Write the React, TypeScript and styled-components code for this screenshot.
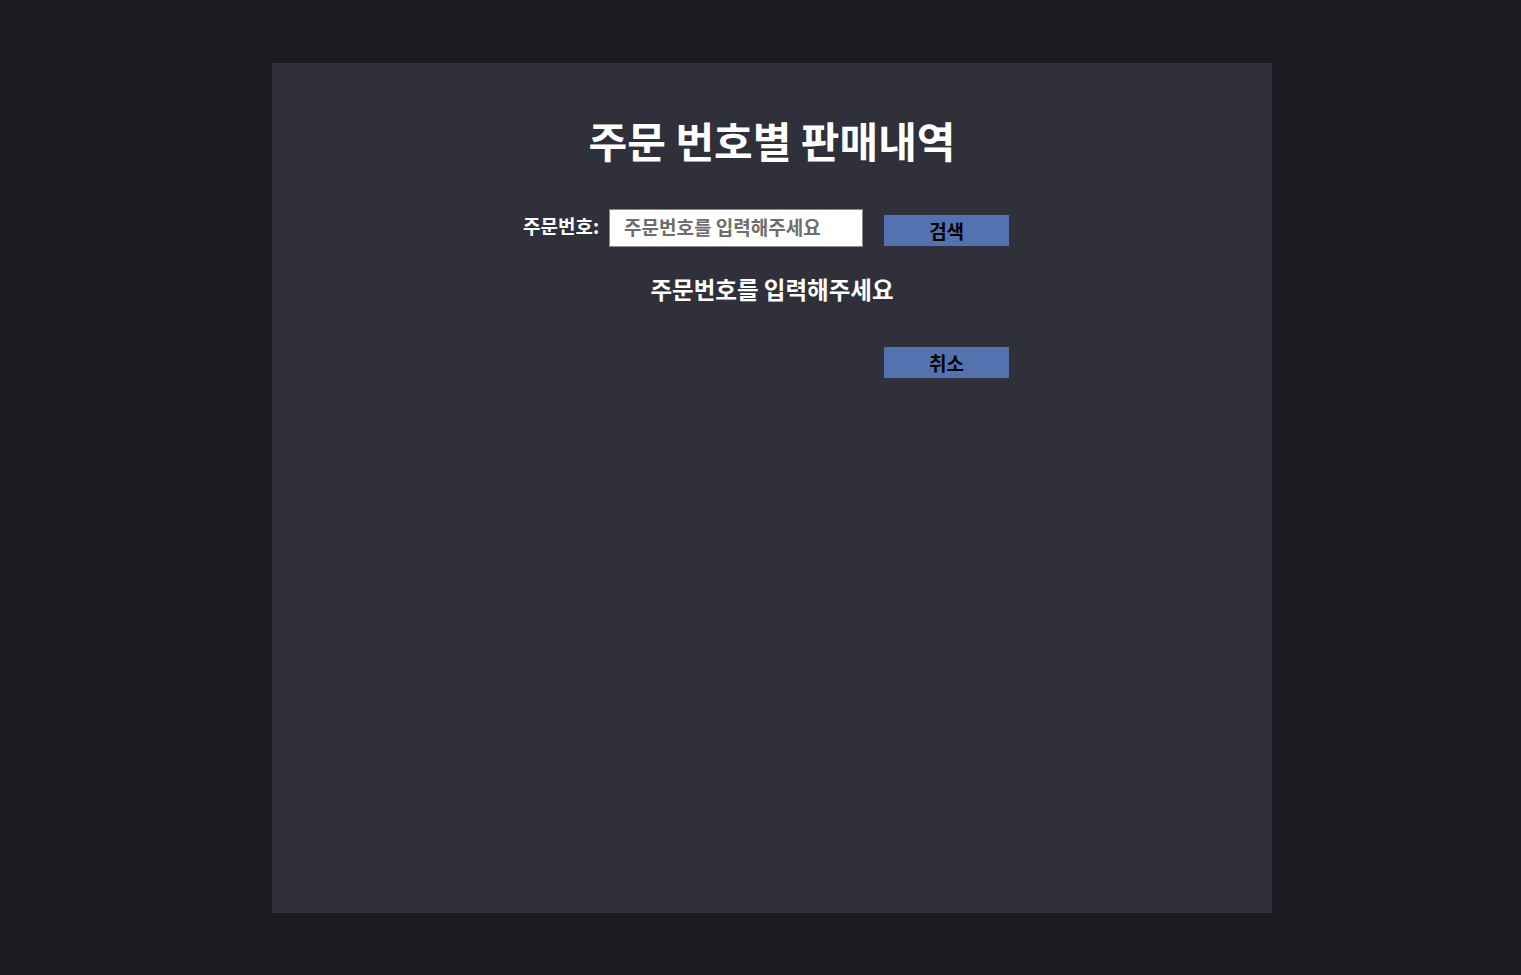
import React from "react";
import styled, { createGlobalStyle } from "styled-components";

const Global = createGlobalStyle`
  html, body { margin: 0; padding: 0; background: #1b1c20; }
  body { font-family: "Noto Sans CJK KR", "Noto Sans", sans-serif; }
  * { box-sizing: border-box; }
`;

const Page = styled.div`
  min-height: 975px;
  padding: 63px 0 0 23px;
  display: flex;
  justify-content: center;
`;

const Panel = styled.main`
  width: 1000px;
  height: 850px;
  background: #30303a;
  display: flex;
  flex-direction: column;
  align-items: center;
  padding-top: 56px;
`;

const Title = styled.h1`
  margin: 0;
  color: #fff;
  font-size: 42px;
  font-weight: 700;
  line-height: 1;
`;

const Block = styled.div`
  width: 498px;
  margin-top: 48px;
  display: flex;
  flex-direction: column;
`;

const Row = styled.div`
  display: flex;
  align-items: flex-start;
`;

const Label = styled.label`
  color: #fff;
  font-size: 19px;
  font-weight: 700;
  line-height: 1;
  margin-top: 7px;
  margin-right: 10px;
  white-space: nowrap;
`;

const Input = styled.input`
  width: 254px;
  height: 38px;
  flex: none;
  border: 1px solid #8a8a8a;
  background: #fff;
  padding: 0 0 4px 14px;
  font-family: inherit;
  font-size: 19px;
  font-weight: 700;
  outline: none;
  &::placeholder { color: #6e6e6e; }
`;

const Button = styled.button`
  width: 125px;
  height: 31px;
  flex: none;
  border: none;
  background: #5572b0;
  color: #000;
  font-family: inherit;
  font-size: 19px;
  font-weight: 700;
  padding: 0;
  line-height: 1;
`;

const SearchButton = styled(Button)`
  margin-left: 21px;
  margin-top: 6px;
`;

const CancelButton = styled(Button)`
  align-self: flex-end;
  margin-right: 12px;
  margin-top: 45px;
`;

const Message = styled.p`
  margin: 31px 0 0;
  text-align: center;
  color: #fff;
  font-size: 23.5px;
  font-weight: 700;
  line-height: 1;
`;

export default function App() {
  return (
    <>
      <Global />
      <Page>
        <Panel>
          <Title>주문 번호별 판매내역</Title>
          <Block>
            <Row>
              <Label htmlFor="order">주문번호:</Label>
              <Input id="order" placeholder="주문번호를 입력해주세요" />
              <SearchButton>검색</SearchButton>
            </Row>
            <Message>주문번호를 입력해주세요</Message>
            <CancelButton>취소</CancelButton>
          </Block>
        </Panel>
      </Page>
    </>
  );
}
